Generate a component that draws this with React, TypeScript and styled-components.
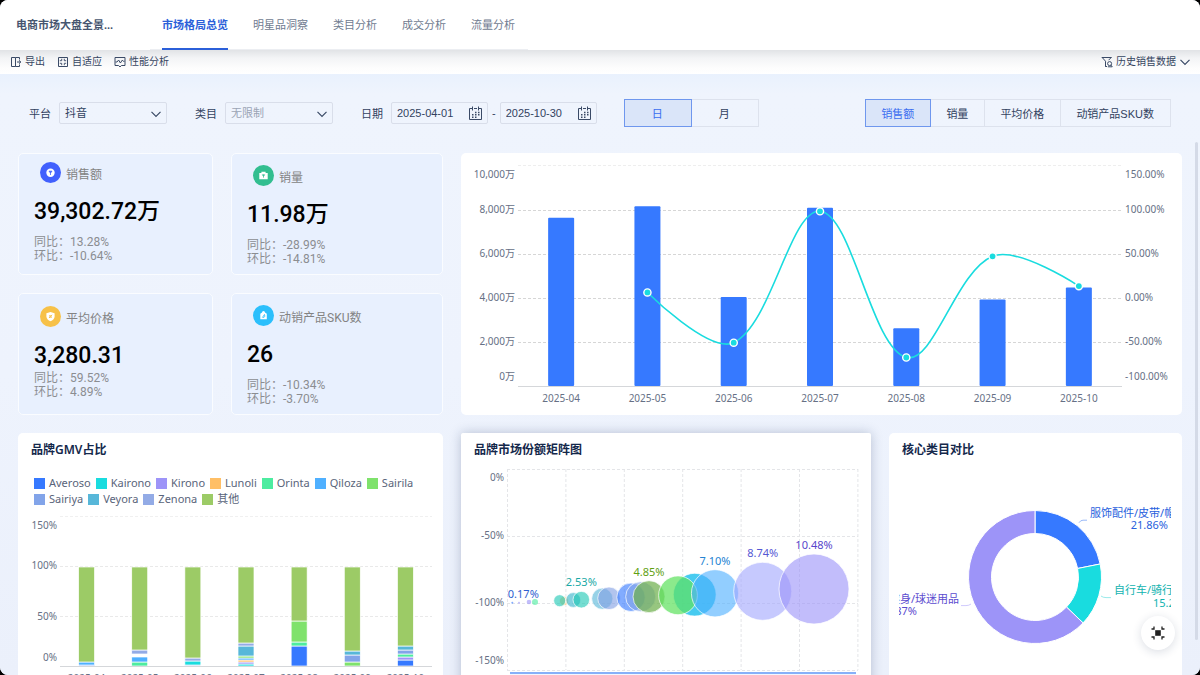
import React from "react";
import styled, { createGlobalStyle, css } from "styled-components";

const UI_FONT = '"Liberation Sans", "Noto Sans CJK SC", sans-serif';
const CHART_FONT = '"Noto Sans", "Noto Sans CJK SC", sans-serif';
const KPI_FONT = 'Roboto, "Noto Sans CJK SC", sans-serif';

const GlobalStyle = createGlobalStyle`
  *, *::before, *::after { box-sizing: border-box; }
  body {
    margin: 0;
    background: #000;
    overflow: hidden;
    font-family: ${UI_FONT};
    font-size: 11px;
    color: #324260;
  }
  button, input, select { font: inherit; color: inherit; }
  h1, h2, p, dl, dd { margin: 0; }
`;

const Shell = styled.div`
  position: relative;
  display: flex;
  flex-direction: column;
  height: 100vh;
  overflow: hidden;
  border-radius: 8px;
  background: #eef3fd;
`;

/* ---------- header ---------- */

const Header = styled.header`
  position: relative;
  z-index: 1;
  flex: none;
  display: flex;
  height: 50px;
  background: #fff;
`;

const Brand = styled.h1`
  flex: none;
  width: 150px;
  padding-left: 16px;
  font-size: 11px;
  line-height: 51px;
  font-weight: 700;
  color: #46556f;
`;

const Tabs = styled.nav`
  display: flex;
  gap: 25px;
  padding: 0 13px 0 12px;
  border-bottom: 1px solid #eceef2;
`;

const Tab = styled.a<{ $active?: boolean }>`
  height: 50px;
  line-height: 51px;
  text-decoration: none;
  color: #6f7b90;
  ${(p) =>
    p.$active &&
    css`
      color: #2b5fd9;
      font-weight: 700;
      border-bottom: 2px solid #2b5fd9;
    `}
`;

const Toolbar = styled.div`
  flex: none;
  display: flex;
  align-items: center;
  gap: 12px;
  height: 24px;
  padding: 0 9px 0 10px;
  background: linear-gradient(#e1e3e6, #f3f4f6 8px, #fdfdfd 18px, #fff);
`;

const ToolButton = styled.button<{ $end?: boolean }>`
  display: flex;
  align-items: center;
  gap: 3px;
  padding: 0;
  border: 0;
  background: none;
  font-size: 10px;
  line-height: 12px;
  color: #36455f;
  margin-left: ${(p) => (p.$end ? "auto" : "0")};
`;

/* ---------- filters ---------- */

const Content = styled.main`
  flex: 1;
  min-height: 0;
  overflow: hidden;
  background: linear-gradient(#e9f1fd, #eff4fd 20px, #eef3fd 50%, #ebf0fb);
`;

const Filters = styled.form`
  display: flex;
  align-items: center;
  gap: 28px;
  padding: 25px 29px 26px;
`;

const Field = styled.div`
  display: flex;
  align-items: center;
  gap: 8px;
`;

const SelectBox = styled.div`
  position: relative;
  width: 108px;
  svg {
    position: absolute;
    right: 5px;
    top: 6px;
    pointer-events: none;
  }
`;

const boxed = css`
  height: 22px;
  border: 1px solid #d9deea;
  border-radius: 2px;
  background: transparent;
`;

const Select = styled.select<{ $muted?: boolean }>`
  ${boxed}
  display: block;
  appearance: none;
  width: 100%;
  padding: 0 20px 0 5px;
  color: ${(p) => (p.$muted ? "#9ba4b5" : "#324260")};
`;

const DateBox = styled.div`
  ${boxed}
  display: flex;
  align-items: center;
  width: 97px;
  padding: 0 5px;
`;

const DateInput = styled.input`
  flex: 1;
  min-width: 0;
  padding: 0;
  border: 0;
  outline: 0;
  background: none;
`;

const DateRange = styled.div`
  display: flex;
  align-items: center;
  gap: 4px;
`;

const Segments = styled.div<{ $end?: boolean }>`
  display: flex;
  margin-left: ${(p) => (p.$end ? "auto" : "0")};
`;

const Segment = styled.button<{ $active?: boolean; $wide?: boolean }>`
  height: 28px;
  margin-left: -1px;
  padding: ${(p) => (p.$wide ? "0 28px 0 27px" : "0 16px 0 15px")};
  border: 1px solid #dde2ed;
  background: transparent;
  white-space: nowrap;
  ${(p) =>
    p.$active &&
    css`
      position: relative;
      border-color: #6f97ee;
      background: #dae5f9;
      color: #3a6df0;
    `}
`;

/* ---------- panels ---------- */

const Board = styled.div`
  display: grid;
  gap: 18px;
  padding: 0 18px;
`;

const TopRow = styled.section`
  display: grid;
  grid-template-columns: 425fr 721fr;
  gap: 18px;
`;

const BottomRow = styled.section`
  display: grid;
  grid-template-columns: 425fr 410fr 293fr;
  align-items: start;
  gap: 18px;
`;

const Panel = styled.article<{ $raised?: boolean }>`
  min-width: 0;
  border-radius: ${(p) => (p.$raised ? 2 : 5)}px;
  background: #fff;
  box-shadow: ${(p) => (p.$raised ? "0 0 12px rgba(40, 60, 100, 0.28)" : "none")};
`;

const PanelTitle = styled.h2`
  padding: 0 13px;
  font-family: ${CHART_FONT};
  font-size: 12px;
  line-height: 34px;
  font-weight: 600;
  color: #14284b;
`;

const Chart = styled.svg`
  display: block;
  width: 100%;
  height: auto;
  font-family: ${CHART_FONT};
  font-size: 10px;
  fill: #667085;
`;

/* ---------- KPI cards ---------- */

const KpiGrid = styled.div`
  display: grid;
  grid-template-columns: 195fr 212fr;
  grid-auto-rows: 1fr;
  gap: 18px;
`;

const KpiCard = styled.article<{ $top: number }>`
  padding: ${(p) => p.$top}px 15px 0;
  border: 1px solid #fafcff;
  border-radius: 5px;
  background: #e8f0fe;
  font-family: ${KPI_FONT};
`;

const KpiHead = styled.div`
  display: flex;
  align-items: center;
  gap: 5px;
  height: 22px;
  padding-left: 6px;
  svg { flex: none; }
`;

const KpiName = styled.h2`
  padding-top: 5px;
  font-size: 12px;
  line-height: 16px;
  font-weight: 400;
  color: #838383;
`;

const KpiValue = styled.p`
  margin-top: 14px;
  font-size: 23px;
  line-height: 30px;
  font-weight: 500;
  color: #000;
`;

const KpiRatios = styled.dl<{ $tight?: boolean }>`
  margin-top: ${(p) => (p.$tight ? 0 : 8)}px;
  font-size: 12px;
  line-height: 14px;
  color: #8b8d91;
  div { display: flex; }
`;

/* ---------- legend ---------- */

const Legend = styled.ul`
  display: flex;
  flex-wrap: wrap;
  column-gap: 5px;
  margin: 0;
  padding: 8px 16px 1px;
  list-style: none;
  font-family: ${CHART_FONT};
  font-size: 11px;
  line-height: 16px;
  color: #59647a;
`;

const LegendItem = styled.li<{ $color: string }>`
  display: flex;
  align-items: center;
  gap: 4px;
  &::before {
    content: "";
    width: 11px;
    height: 11px;
    background: ${(p) => p.$color};
  }
`;

/* ---------- overlays ---------- */

const ScrollThumb = styled.div`
  position: absolute;
  right: 2px;
  top: 142px;
  bottom: 35px;
  width: 3px;
  border-radius: 2px;
  background: #d4dae7;
`;

const FloatButton = styled.button`
  position: absolute;
  right: 25px;
  bottom: 25px;
  display: grid;
  place-items: center;
  width: 34px;
  height: 34px;
  padding: 0;
  border: 0;
  border-radius: 50%;
  background: #fff;
  box-shadow: 0 2px 10px rgba(30, 50, 90, 0.16);
`;

/* ---------- icons ---------- */

const LineIcon = ({ children, size = 12 }: { children: React.ReactNode; size?: number }) => (
  <svg width={size} height={size} viewBox="0 0 12 12" fill="none" stroke="#3a4a66" strokeWidth="1" aria-hidden="true">
    {children}
  </svg>
);

const ExportIcon = () => (
  <LineIcon>
    <path d="M5.5 1.5H1.5V10.5H5.5ZM5.5 1.5H9.5V3.5M5.5 10.5H9.5V8.5M7 6H10.8M9 4.3L10.8 6L9 7.7" />
  </LineIcon>
);
const FitIcon = () => (
  <LineIcon>
    <path d="M1.5 1.5H10.5V10.5H1.5Z" />
    <path d="M4.7 2.8V4.7H2.8M7.3 2.8V4.7H9.2M4.7 9.2V7.3H2.8M7.3 9.2V7.3H9.2" strokeWidth="0.9" />
  </LineIcon>
);
const PulseIcon = () => (
  <LineIcon>
    <path d="M1 1.5H11V9.5H7.4L6 11L4.6 9.5H1ZM1.5 6H3L4.6 4L6.4 7L8.2 4.2L9.2 5.2H10.6" />
  </LineIcon>
);
const FilterIcon = () => (
  <LineIcon>
    <path d="M0.8 1.5H10.6M1.2 1.5L4.5 5.2V10.8M10.2 1.5L7.6 4.2M4.5 10.5H6" />
    <circle cx="8.6" cy="7.6" r="2" />
    <path d="M6.8 10.8H11.2M10 9.1L11.3 10.8" />
  </LineIcon>
);
const Chevron = () => (
  <LineIcon>
    <path d="M1.5 3.8L6 8.3L10.5 3.8" strokeWidth="1.2" />
  </LineIcon>
);
const CalendarIcon = () => (
  <svg width="13" height="14" viewBox="0 0 13 14" fill="none" stroke="#3a4a66" aria-hidden="true">
    <path d="M3.5 2.5H0.5V13.5H12.5V2.5H9.5M5 2.5H8M3.5 0.5V4.5M9.5 0.5V4.5" />
    <path d="M6 6.5H7.5M9 6.5H10.5M3 8.8H4.5M6 8.8H7.5M9 8.8H10.5M3 11.2H4.5M6 11.2H7.5" strokeWidth="1.4" />
  </svg>
);
const CollapseIcon = () => (
  <svg width="14" height="14" viewBox="0 0 14 14" fill="none" stroke="#222" aria-hidden="true">
    <rect x="4.2" y="4.2" width="5.6" height="5.6" fill="#222" stroke="none" />
    <path d="M0.5 3H3V0.5M13.5 3H11V0.5M0.5 11H3V13.5M13.5 11H11V13.5" strokeWidth="1.3" />
  </svg>
);

const KpiIcon = ({ color, kind }: { color: string; kind: string }) => (
  <svg width="21" height="21" viewBox="0 0 21 21" aria-hidden="true">
    <circle cx="10.5" cy="10.5" r="10.5" fill={color} />
    {kind === "coin" && (
      <>
        <circle cx="10.5" cy="10.8" r="4.2" fill="#fff" />
        <path d="M9 9.2H12L10.5 11ZM10.5 10.4V13" stroke={color} strokeWidth="0.8" fill={color} />
      </>
    )}
    {kind === "case" && (
      <>
        <path d="M6.3 8H8.4V6.8H12.6V8H14.7V14.2H6.3Z" fill="#fff" />
        <path d="M9.4 9.8H11.6L10.5 11ZM10.5 10.6V12.6" stroke={color} strokeWidth="0.8" fill={color} />
      </>
    )}
    {kind === "shield" && (
      <>
        <path d="M10.5 6L14.6 7.3V10.6C14.6 13 12.6 14.4 10.5 15.2C8.4 14.4 6.4 13 6.4 10.6V7.3Z" fill="#fff" />
        <path d="M9 12L12 8.8M9 9.8H12M9 11.2H12" stroke={color} strokeWidth="0.9" />
      </>
    )}
    {kind === "bag" && (
      <>
        <path d="M7.3 8.8L9 7.4A1.5 1.5 0 0 1 12 7.4L13.8 8.8V14.2H7.3Z" fill="#fff" />
        <path d="M9.3 12.6L11.6 9.4M10.2 12.6C11.8 12.4 12 11 11.4 9.6" stroke={color} strokeWidth="0.9" fill="none" />
      </>
    )}
  </svg>
);

/* ---------- data ---------- */

const kpis = [
  { name: "销售额", value: "39,302.72万", yoy: "13.28%", mom: "-10.64%", color: "#4160fd", kind: "coin", top: 7 },
  { name: "销量", value: "11.98万", yoy: "-28.99%", mom: "-14.81%", color: "#32be90", kind: "case", top: 10 },
  { name: "平均价格", value: "3,280.31", yoy: "59.52%", mom: "4.89%", color: "#f7c148", kind: "shield", top: 11, tight: true },
  { name: "动销产品SKU数", value: "26", yoy: "-10.34%", mom: "-3.70%", color: "#2bbffc", kind: "bag", top: 10 },
];

const months = ["2025-04", "2025-05", "2025-06", "2025-07", "2025-08", "2025-09", "2025-10"];
const sales = [7647, 8172, 4040, 8100, 2624, 3937, 4480];
const growth = [null, 6.3, -50.8, 98.5, -67.6, 47.4, 13.5];

const C = {
  Averoso: "#3679ff",
  Kairono: "#19dcdf",
  Kirono: "#9d94f8",
  Lunoli: "#ffbf66",
  Orinta: "#4deca0",
  Qiloza: "#4fb0ff",
  Sairila: "#7fe26c",
  Sairiya: "#82a4e9",
  Veyora: "#57b7d9",
  Zenona: "#93abe6",
  其他: "#9ccb66",
};
type Brand = keyof typeof C;

const shares: [Brand | null, number][][] = [
  [["Averoso", 1], ["Qiloza", 3], ["其他", 96]],
  [["Orinta", 4], ["Qiloza", 5], [null, 3], ["Zenona", 4], ["其他", 84]],
  [["Sairiya", 1], ["Kairono", 4], ["Zenona", 3], ["其他", 92]],
  [["Kairono", 2], ["Kirono", 2], ["Lunoli", 2], ["Qiloza", 2], ["Sairila", 2], ["Veyora", 10], ["Zenona", 3], ["其他", 77]],
  [["Averoso", 20], ["Orinta", 4], ["Sairila", 21], ["其他", 55]],
  [["Sairila", 4], ["Sairiya", 7], ["Veyora", 4], ["其他", 85]],
  [["Averoso", 6], ["Kirono", 3], ["Orinta", 3], ["Sairiya", 4], ["Veyora", 4], ["其他", 80]],
];

const bubbles = [
  { x: 51.3, y: 135.7, r: 1, color: "#3679ff", label: "0.17%", text: "#2f5fd0", dx: 11, dy: -9 },
  { x: 58, y: 135.7, r: 1, color: "#9d94f8" },
  { x: 68, y: 135, r: 2.3, color: "#9d94f8" },
  { x: 74, y: 135, r: 3, color: "#4deca0" },
  { x: 103, y: 134, r: 4.6, color: "#ffbf66" },
  { x: 98.7, y: 133.7, r: 6, color: "#1fc8b4" },
  { x: 112.3, y: 133, r: 7.4, color: "#35b3c9" },
  { x: 120.3, y: 132.7, r: 8.3, color: "#1fc8b4", label: "2.53%", text: "#1aa9a6" },
  { x: 141.3, y: 131.7, r: 10.6, color: "#57b7d9" },
  { x: 148, y: 131.3, r: 11.3, color: "#82a0e3" },
  { x: 170, y: 130.3, r: 14.2, color: "#3679ff" },
  { x: 179.7, y: 129.7, r: 15, color: "#82a4e9" },
  { x: 188, y: 129.7, r: 16, color: "#6fb04e", opacity: 0.72, label: "4.85%", text: "#5f9f12" },
  { x: 233.7, y: 127.7, r: 21.4, color: "#00b7ea", opacity: 0.72 },
  { x: 217, y: 128.3, r: 19.4, color: "#5fe260", opacity: 0.72 },
  { x: 254, y: 126.3, r: 23.6, color: "#4fb0ff", label: "7.10%", text: "#2583d2" },
  { x: 301.7, y: 124.3, r: 29, color: "#a3a8fd", label: "8.74%", text: "#5558d4" },
  { x: 353, y: 122, r: 35, color: "#9d94f8", label: "10.48%", text: "#5746cc" },
];

/* ---------- charts ---------- */

/* Smooth curve: each control point follows the chord of its neighbours, weighted by segment length. */
function smoothPath(pts: [number, number][]) {
  const dist = (a: [number, number], b: [number, number]) => Math.hypot(a[0] - b[0], a[1] - b[1]);
  const handle = (i: number, dir: 1 | -1): [number, number] => {
    const p = pts[i];
    const prev = pts[i - 1];
    const next = pts[i + 1];
    if (!prev || !next) return p;
    const before = dist(prev, p);
    const after = dist(p, next);
    const k = (0.36 * dir * (dir === 1 ? after : before)) / (before + after);
    return [p[0] + (next[0] - prev[0]) * k, p[1] + (next[1] - prev[1]) * k];
  };
  return pts.slice(1).reduce((d, p, i) => {
    const a = handle(i, 1);
    const b = handle(i + 1, -1);
    return `${d}C${a[0]} ${a[1]} ${b[0]} ${b[1]} ${p[0]} ${p[1]}`;
  }, `M${pts[0][0]} ${pts[0][1]}`);
}

function TrendChart() {
  const left = 57;
  const right = 661;
  const top = 13;
  const base = 233;
  const step = (right - left) / months.length;
  const cx = (i: number) => left + step * (i + 0.5);
  const pts = growth
    .map((g, i) => (g === null ? null : [cx(i), base - ((g + 100) / 250) * (base - top)]))
    .filter(Boolean) as [number, number][];
  const labelY = [25, 60, 104, 148, 192, 227];
  const lefts = ["10,000万", "8,000万", "6,000万", "4,000万", "2,000万", "0万"];
  const rights = ["150.00%", "100.00%", "50.00%", "0.00%", "-50.00%", "-100.00%"];
  return (
    <Chart viewBox="0 0 721 262" role="img" aria-label="销售额趋势">
      {[0, 1, 2, 3, 4].map((i) => (
        <path key={i} d={`M${left} ${top + i * 44 - (i ? -0.5 : 0.5)}H${right}`} stroke={i ? "#d6d6d6" : "#eeeeee"} strokeDasharray="3 2" />
      ))}
      {labelY.map((y, i) => (
        <React.Fragment key={y}>
          <text x="54" y={y} textAnchor="end">{lefts[i]}</text>
          <text x="664" y={y}>{rights[i]}</text>
        </React.Fragment>
      ))}
      {sales.map((v, i) => {
        const h = (v / 10000) * (base - top);
        return <rect key={i} x={cx(i) - 13} y={base - h} width="26" height={h} rx="1" fill="#3679ff" />;
      })}
      <path d={`M${left} ${base + 0.5}H${right}`} stroke="#d5d7da" />
      {months.map((m, i) => (
        <text key={m} x={cx(i)} y="249" textAnchor="middle">{m}</text>
      ))}
      <path d={smoothPath(pts)} fill="none" stroke="#19dcdf" strokeWidth="1.6" />
      {pts.map(([x, y]) => (
        <circle key={x} cx={x} cy={y} r="3.6" fill="#19dcdf" stroke="#fff" strokeWidth="1.4" />
      ))}
    </Chart>
  );
}

function ShareChart() {
  const left = 42;
  const right = 414;
  const base = 158;
  const step = (right - left) / months.length;
  return (
    <Chart viewBox="0 0 425 200" role="img" aria-label="品牌GMV占比">
      {[8, 58, 108].map((y, i) => (
        <path key={y} d={`M${left} ${y + 0.5}H${right}`} stroke={i ? "#e9e9e9" : "#f0f0f0"} strokeDasharray="3 2" />
      ))}
      {[["150%", 21], ["100%", 61], ["50%", 112], ["0%", 153]].map(([t, y]) => (
        <text key={t} x="39" y={y} textAnchor="end">{t}</text>
      ))}
      {shares.map((stack, i) => {
        let y = base;
        return stack.map(([brand, v], k) => {
          const h = brand === "其他" ? v - 1 : v;
          y -= h;
          return brand ? (
            <rect key={`${i}-${k}`} x={left + step * (i + 0.5) - 8} y={y} width="16" height={h} fill={C[brand]} stroke="#fff" strokeWidth="0.7" />
          ) : null;
        });
      })}
      <path d={`M${left} ${base + 0.5}H${right}`} stroke="#d5d7da" />
      {months.map((m, i) => (
        <text key={m} x={left + step * (i + 0.5)} y="174" textAnchor="middle">{m}</text>
      ))}
    </Chart>
  );
}

function BubbleChart() {
  return (
    <Chart viewBox="0 0 410 250" role="img" aria-label="品牌市场份额矩阵图">
      <g stroke="#e4e5e8" strokeDasharray="3 2">
        {[2, 69, 136, 203].map((y) => (
          <path key={y} d={`M46 ${y + 0.5}H397`} />
        ))}
        {[0, 1, 2, 3, 4, 5, 6].map((i) => (
          <path key={i} d={`M${46.5 + i * 58.4} 2V203`} />
        ))}
      </g>
      {[["0%", 14], ["-50%", 72], ["-100%", 139], ["-150%", 197]].map(([t, y]) => (
        <text key={t} x="43" y={y} textAnchor="end">{t}</text>
      ))}
      {bubbles.map((b) => (
        <circle key={b.x} cx={b.x} cy={b.y} r={b.r} fill={b.color} fillOpacity={b.opacity ?? 0.62} stroke="#fff" strokeOpacity="0.7" strokeWidth={b.r > 3 ? 1 : 0} />
      ))}
      <g fontSize="11">
        {bubbles.map((b) =>
          b.label ? (
            <text key={b.label} x={b.x + (b.dx ?? 0)} y={b.y - b.r - 5 + (b.dy ? 1 : 0)} textAnchor="middle" fill={b.text}>
              {b.label}
            </text>
          ) : null
        )}
      </g>
      <rect x="49" y="205" width="346" height="30" fill="#f3f7ff" />
      <rect x="49" y="205" width="346" height="2" fill="#86b0f8" />
    </Chart>
  );
}

function DonutChart() {
  const cx = 146;
  const cy = 110;
  const outer = 66.5;
  const inner = 43.5;
  const arc = (from: number, to: number) => {
    const at = (r: number, t: number) => `${cx + r * Math.sin(t * 2 * Math.PI)} ${cy - r * Math.cos(t * 2 * Math.PI)}`;
    const big = to - from > 0.5 ? 1 : 0;
    return `M${at(outer, from)}A${outer} ${outer} 0 ${big} 1 ${at(outer, to)}L${at(inner, to)}A${inner} ${inner} 0 ${big} 0 ${at(inner, from)}Z`;
  };
  return (
    <Chart viewBox="0 0 293 250" role="img" aria-label="核心类目对比">
      <clipPath id="donut-area">
        <rect x="10" y="0" width="272" height="250" />
      </clipPath>
      <g stroke="#fff">
        <path d={arc(0, 0.2186)} fill="#3679ff" />
        <path d={arc(0.2186, 0.3713)} fill="#19dcdf" />
        <path d={arc(0.3713, 1)} fill="#9d94f8" />
      </g>
      <g fill="none" strokeWidth="0.8">
        <path d="M190 55.7Q191.5 53.2 194 53.2H198" stroke="#7ea6f5" />
        <path d="M212 129Q214 130.6 217 130.6H222" stroke="#7fe3e4" />
        <path d="M72 138.6H77Q80 138.6 82 137" stroke="#c3bdfb" />
      </g>
      <g fontSize="11" clipPath="url(#donut-area)">
        <g fill="#2760dd">
          <text x="201" y="50">服饰配件/皮带/帽子</text>
          <text x="279" y="62" textAnchor="end">21.86%</text>
        </g>
        <g fill="#12b3b0">
          <text x="225" y="127">自行车/骑行</text>
          <text x="264" y="140">15.27%</text>
        </g>
        <g fill="#5b4bcf" textAnchor="end">
          <text x="70" y="136">健身/球迷用品</text>
          <text x="28" y="148">62.87%</text>
        </g>
      </g>
    </Chart>
  );
}

/* ---------- page ---------- */

export default function App() {
  return (
    <>
      <GlobalStyle />
      <Shell>
        <Header>
          <Brand>电商市场大盘全景...</Brand>
          <Tabs>
            <Tab href="#overview" $active aria-current="page">市场格局总览</Tab>
            <Tab href="#stars">明星品洞察</Tab>
            <Tab href="#category">类目分析</Tab>
            <Tab href="#deals">成交分析</Tab>
            <Tab href="#traffic">流量分析</Tab>
          </Tabs>
        </Header>
        <Toolbar>
          <ToolButton type="button"><ExportIcon />导出</ToolButton>
          <ToolButton type="button"><FitIcon />自适应</ToolButton>
          <ToolButton type="button"><PulseIcon />性能分析</ToolButton>
          <ToolButton type="button" $end>
            <FilterIcon />历史销售数据 <Chevron />
          </ToolButton>
        </Toolbar>
        <Content>
          <Filters onSubmit={(e) => e.preventDefault()}>
            <Field>
              <label htmlFor="platform">平台</label>
              <SelectBox>
                <Select id="platform"><option>抖音</option></Select>
                <Chevron />
              </SelectBox>
            </Field>
            <Field>
              <label htmlFor="category">类目</label>
              <SelectBox>
                <Select id="category" $muted><option>无限制</option></Select>
                <Chevron />
              </SelectBox>
            </Field>
            <Field>
              <label htmlFor="date-from">日期</label>
              <DateRange>
                <DateBox>
                  <DateInput id="date-from" defaultValue="2025-04-01" />
                  <CalendarIcon />
                </DateBox>
                -
                <DateBox>
                  <DateInput aria-label="结束日期" defaultValue="2025-10-30" />
                  <CalendarIcon />
                </DateBox>
              </DateRange>
            </Field>
            <Segments role="group" aria-label="粒度">
              <Segment type="button" $active $wide aria-pressed="true">日</Segment>
              <Segment type="button" $wide aria-pressed="false">月</Segment>
            </Segments>
            <Segments $end role="group" aria-label="指标">
              <Segment type="button" $active aria-pressed="true">销售额</Segment>
              <Segment type="button" aria-pressed="false">销量</Segment>
              <Segment type="button" aria-pressed="false">平均价格</Segment>
              <Segment type="button" aria-pressed="false">动销产品SKU数</Segment>
            </Segments>
          </Filters>
          <Board>
            <TopRow>
              <KpiGrid>
                {kpis.map((k) => (
                  <KpiCard key={k.name} $top={k.top}>
                    <KpiHead>
                      <KpiIcon color={k.color} kind={k.kind} />
                      <KpiName>{k.name}</KpiName>
                    </KpiHead>
                    <KpiValue>{k.value}</KpiValue>
                    <KpiRatios $tight={k.tight}>
                      <div><dt>同比：</dt><dd>{k.yoy}</dd></div>
                      <div><dt>环比：</dt><dd>{k.mom}</dd></div>
                    </KpiRatios>
                  </KpiCard>
                ))}
              </KpiGrid>
              <Panel><TrendChart /></Panel>
            </TopRow>
            <BottomRow>
              <Panel>
                <PanelTitle>品牌GMV占比</PanelTitle>
                <Legend>
                  {(Object.keys(C) as Brand[]).map((b) => (
                    <LegendItem key={b} $color={C[b]}>{b}</LegendItem>
                  ))}
                </Legend>
                <ShareChart />
              </Panel>
              <Panel $raised>
                <PanelTitle>品牌市场份额矩阵图</PanelTitle>
                <BubbleChart />
              </Panel>
              <Panel>
                <PanelTitle>核心类目对比</PanelTitle>
                <DonutChart />
              </Panel>
            </BottomRow>
          </Board>
        </Content>
        <ScrollThumb />
        <FloatButton type="button" aria-label="退出全屏"><CollapseIcon /></FloatButton>
      </Shell>
    </>
  );
}
